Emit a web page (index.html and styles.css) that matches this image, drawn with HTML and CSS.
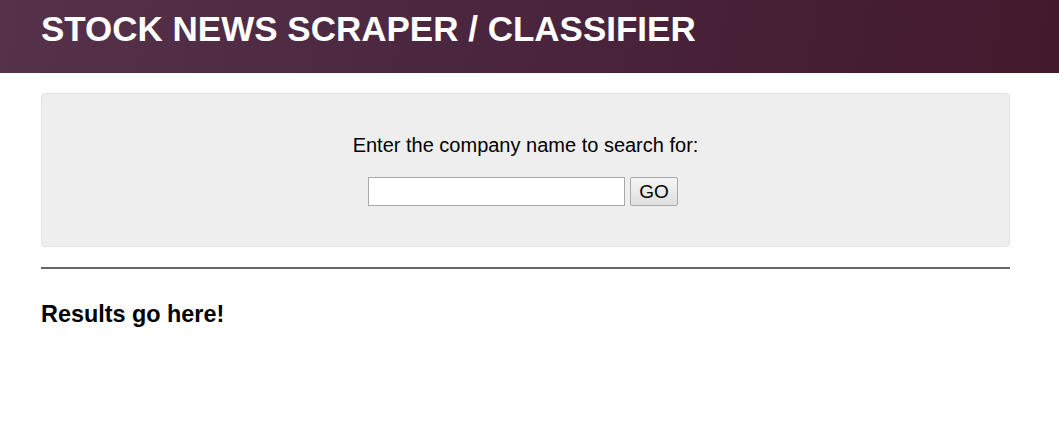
FILE: index.html
```html
<!DOCTYPE html>
<html>
<head>
<meta charset="utf-8">
<link rel="stylesheet" href="styles.css">
</head>
<body>
<header class="topbar">
  <h1 class="title">STOCK NEWS SCRAPER / CLASSIFIER</h1>
</header>
<main class="content">
  <section class="well">
    <p class="prompt">Enter the company name to search for:</p>
    <form class="search" onsubmit="return false">
      <input class="search-input" type="text">
      <button class="search-btn" type="submit">GO</button>
    </form>
  </section>
  <hr class="divider">
  <h3 class="results">Results go here!</h3>
</main>
</body>
</html>
```
FILE: styles.css
```css
html, body {
  margin: 0;
  padding: 0;
  background: #fff;
  font-family: "Liberation Sans", Arial, sans-serif;
  color: #000;
}
.topbar {
  height: 73px;
  background: linear-gradient(100deg, #56324a 0%, #4b2740 40%, #43192d 100%);
  padding: 0 49px 0 41px;
  box-sizing: border-box;
}
.title {
  margin: 0;
  padding-top: 10px;
  font-size: 35px;
  line-height: 38px;
  font-weight: bold;
  color: #fff;
}
.content {
  margin: 20px 49px 0 41px;
}
.well {
  background: #eee;
  border: 1px solid #e3e3e3;
  border-radius: 4px;
  padding: 38px 19px 40px;
  text-align: center;
}
.prompt {
  margin: 0 0 19px;
  font-size: 20px;
  line-height: 26px;
}
.search {
  display: flex;
  justify-content: center;
  gap: 5px;
  padding-right: 5px;
}
.search-input {
  width: 257px;
  height: 29px;
  box-sizing: border-box;
  border: 1px solid #a9a9a9;
  background: #fff;
  padding: 0 4px;
  font-size: 16px;
  margin: 0;
}
.search-btn {
  height: 29px;
  width: 48px;
  box-sizing: border-box;
  border: 1px solid #a9a9a9;
  border-radius: 2px;
  background: linear-gradient(#f6f6f6, #dedede);
  font-family: "Liberation Sans", Arial, sans-serif;
  font-size: 19px;
  padding: 0;
  margin: 0;
  color: #000;
}
.divider {
  margin: 20px 0 0;
  border: 0;
  height: 2px;
  background: #666;
}
.results {
  margin: 31px 0 0;
  font-size: 23.4px;
  line-height: 28px;
  font-weight: bold;
}
```
